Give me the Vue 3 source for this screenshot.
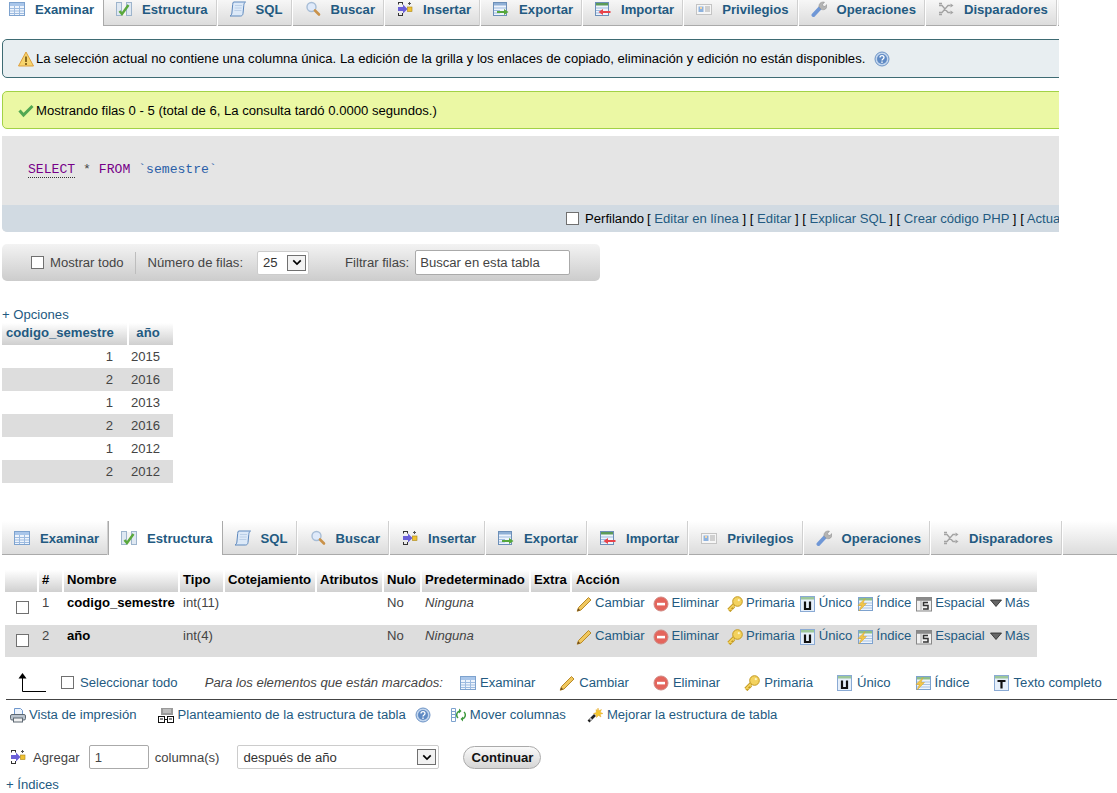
<script setup>
const tabs = [
  { label: 'Examinar', icon: 'i-browse' },
  { label: 'Estructura', icon: 'i-structure' },
  { label: 'SQL', icon: 'i-sql' },
  { label: 'Buscar', icon: 'i-search' },
  { label: 'Insertar', icon: 'i-insert' },
  { label: 'Exportar', icon: 'i-export' },
  { label: 'Importar', icon: 'i-import' },
  { label: 'Privilegios', icon: 'i-priv' },
  { label: 'Operaciones', icon: 'i-ops' },
  { label: 'Disparadores', icon: 'i-trig' }
]
const rows = [[1, 2015], [2, 2016], [1, 2013], [2, 2016], [1, 2012], [2, 2012]]
const fields = [
  { n: 1, name: 'codigo_semestre', type: 'int(11)' },
  { n: 2, name: 'año', type: 'int(4)' }
]
const heads = ['', '#', 'Nombre', 'Tipo', 'Cotejamiento', 'Atributos', 'Nulo', 'Predeterminado', 'Extra', 'Acción']
const actions = [
  { label: 'Cambiar', icon: 'i-pencil', wide: true },
  { label: 'Eliminar', icon: 'i-del', wide: true },
  { label: 'Primaria', icon: 'i-key' },
  { label: 'Único', icon: 'i-unique' },
  { label: 'Índice', icon: 'i-index' },
  { label: 'Espacial', icon: 'i-spatial' },
  { label: 'Más', icon: 'i-more', small: true }
]
const bulk = [
  { label: 'Examinar', icon: 'i-browse' },
  { label: 'Cambiar', icon: 'i-pencil' },
  { label: 'Eliminar', icon: 'i-del' },
  { label: 'Primaria', icon: 'i-key' },
  { label: 'Único', icon: 'i-unique' },
  { label: 'Índice', icon: 'i-index' },
  { label: 'Texto completo', icon: 'i-ftext' }
]
</script>

<template>
  <div class="page">
    <svg class="sprite" aria-hidden="true">
      <symbol id="i-browse" viewBox="0 0 16 16">
        <rect x=".5" y="1.5" width="15" height="13" fill="#eef4fc" stroke="#7da2ce" />
        <rect x="1" y="2" width="14" height="3" fill="#a9c6ea" />
        <path d="M1 7.5h14M1 10h14M1 12.5h14M5.5 5v9M10.5 5v9" stroke="#9dbbe0" fill="none" />
      </symbol>
      <symbol id="i-structure" viewBox="0 0 16 16">
        <rect x=".5" y="1.5" width="5" height="13" fill="#dfe8f2" stroke="#9db4cc" />
        <rect x="10.5" y="1.5" width="5" height="13" fill="#dfe8f2" stroke="#9db4cc" />
        <rect x="6" y="2" width="4" height="12" fill="#f4f4f4" />
        <path d="M3.5 10l2.5 3L12.5 4" fill="none" stroke="#5aa83c" stroke-width="2.4" />
      </symbol>
      <symbol id="i-sql" viewBox="0 0 16 16">
        <path d="M3.500 1h12c-1.200.8-1.600 2-1.700 3.500l-.8 8c-.2 1.500-1 2.500-2.500 2.500H0c1.200-.6 1.700-1.600 1.900-3l.8-8.500c.1-1.200.3-2 .8-2.500z" fill="#dce9f8" stroke="#5d88bd" />
        <path d="M5 4.500h7M4.700 7h7M4.400 9.500h7" stroke="#bcd0e8" fill="none" />
      </symbol>
      <symbol id="i-search" viewBox="0 0 16 16">
        <circle cx="6.500" cy="6" r="4.500" fill="#dfeafa" stroke="#a7bdd6" stroke-width="1.400" />
        <path d="M10 9.500l4 4" stroke="#c9924a" stroke-width="2.600" stroke-linecap="round" />
      </symbol>
      <symbol id="i-insert" viewBox="0 0 16 16">
        <path d="M1 1.500h5M1 14.500h5M1.500 1v2.500M5.500 1v2.500M1.500 12v3M5.500 12v3" stroke="#333" fill="none" />
        <path d="M1 6h5V3.600L10.500 8 6 12.400V10H1z" fill="#6a5fd8" />
        <rect x="10.500" y="6" width="4.500" height="4.500" fill="#f1c232" stroke="#a88414" stroke-width=".6" />
        <path d="M12.500 1v3M11 2.500h3" stroke="#555" />
      </symbol>
      <symbol id="i-export" viewBox="0 0 16 16">
        <rect x=".5" y="1.5" width="13" height="13" fill="#eef4fc" stroke="#6c8fb8" />
        <rect x="1" y="2" width="12" height="2.500" fill="#8fb0d6" />
        <path d="M1 7h12M1 9.500h6M1 12h6" stroke="#9dbbe0" />
        <path d="M4 10h7V8l4.500 3-4.500 3v-2H4z" fill="#56a83c" />
      </symbol>
      <symbol id="i-import" viewBox="0 0 16 16">
        <rect x=".5" y="1.500" width="13" height="13" fill="#eef4fc" stroke="#6c8fb8" />
        <rect x="1" y="2" width="12" height="2.500" fill="#5c9a58" />
        <path d="M1 7h12M1 9.500h6M1 12h6" stroke="#9dbbe0" />
        <path d="M15.500 10H8V8l-4.500 3L8 14v-2h7.500z" fill="#e8434a" />
      </symbol>
      <symbol id="i-priv" viewBox="0 0 16 16">
        <rect x=".5" y="3.500" width="15" height="10" fill="#f6f6f6" stroke="#c4c4c4" />
        <rect x="2.500" y="5.500" width="5" height="5.500" fill="#8db2de" />
        <rect x="4" y="6" width="2" height="2" fill="#f3d6a8" />
        <path d="M9 6h5M9 8h5M9 10h5" stroke="#aaa" />
      </symbol>
      <symbol id="i-ops" viewBox="0 0 16 16">
        <path d="M2.500 14L9.500 6.500" stroke="#6f97d6" stroke-width="4" stroke-linecap="round" />
        <path d="M10 1.500c1-.5 2.500-.7 3.500-.3L11.600 3.400l.6 1.800 1.900.4L15.600 3.600c.6 1.600.2 3.300-1 4.300-1.300 1-3 1.100-4.300.4L8 6c-.3-1.900.5-3.600 2-4.500z" fill="#b4b4b4" stroke="#8a8a8a" stroke-width=".5" />
      </symbol>
      <symbol id="i-trig" viewBox="0 0 16 16">
        <path d="M1 4.500h3l6 7h2.500M1 11.500h3l6-7h2.500M1 2.500h3M1 13.500h3" fill="none" stroke="#a3a3a3" stroke-width="1.300" />
        <path d="M12.500 2.500l3 2-3 2zM12.500 9.500l3 2-3 2z" fill="#a3a3a3" />
      </symbol>
      <symbol id="i-warn" viewBox="0 0 16 16">
        <path d="M8 1L15.500 15H.5z" fill="#f6d46c" stroke="#dd9f3c" stroke-linejoin="round" />
        <rect x="7" y="5.500" width="2" height="5.500" fill="#8a6a20" />
        <rect x="7" y="12" width="2" height="2" fill="#8a6a20" />
      </symbol>
      <symbol id="i-help" viewBox="0 0 16 16">
        <circle cx="8" cy="8" r="7" fill="#c3d6ee" stroke="#6d94c6" />
        <circle cx="8" cy="8" r="5" fill="#5f8ac4" />
        <path d="M6 6.500c0-2.500 4-2.500 4 0 0 1.500-2 1.500-2 3" fill="none" stroke="#fff" stroke-width="1.300" />
        <rect x="7.300" y="10.500" width="1.400" height="1.400" fill="#fff" />
      </symbol>
      <symbol id="i-check" viewBox="0 0 16 16">
        <path d="M1.500 8.500l4 4.500L14.500 4" fill="none" stroke="#52a852" stroke-width="3" />
      </symbol>
      <symbol id="i-pencil" viewBox="0 0 16 16">
        <path d="M12.500 1.500l2.500 2.500L5 14l-3.800 1.200L2.500 11.500z" fill="#f0c75e" stroke="#b98a28" />
        <path d="M1.200 15.200l1-3 2 2z" fill="#6b4a20" />
      </symbol>
      <symbol id="i-del" viewBox="0 0 16 16">
        <circle cx="8" cy="8" r="7" fill="#e4655c" stroke="#cf8a84" />
        <rect x="4" y="6.800" width="8" height="2.600" fill="#fff" />
      </symbol>
      <symbol id="i-key" viewBox="0 0 16 16">
        <path d="M1.500 14L8 7.500M2.500 13l2 2M5 10.500l2 2" fill="none" stroke="#c39a22" stroke-width="3.200" />
        <path d="M1.500 14L8 7.500M3 12.500l1.500 1.500M5.500 10l1.500 1.500" fill="none" stroke="#f3d25e" stroke-width="1.600" />
        <circle cx="10.500" cy="5.500" r="4.800" fill="#f3d25e" stroke="#c39a22" />
        <circle cx="11.800" cy="4.200" r="1.100" fill="#fff6c4" />
      </symbol>
      <symbol id="i-unique" viewBox="0 0 16 16">
        <rect x=".5" y=".5" width="14" height="15" fill="#e6effa" stroke="#8aaad4" />
        <rect x="1" y="1" width="13" height="2.500" fill="#9cc79a" />
        <path d="M5 5.500v7.500h5V5.500" fill="none" stroke="#111" stroke-width="2.200" />
      </symbol>
      <symbol id="i-index" viewBox="0 0 16 16">
        <rect x="1.500" y="1.500" width="14" height="13" fill="#eef4fc" stroke="#7da2ce" />
        <rect x="2" y="2" width="13" height="2.500" fill="#8fbf8a" />
        <path d="M2 7h13M2 9.500h13M2 12h13" stroke="#a8c2e2" />
        <path d="M8 2.500L1 9.500h3.500L2 15 9.500 7.500H6z" fill="#f2c648" stroke="#d8a428" stroke-width=".5" />
      </symbol>
      <symbol id="i-spatial" viewBox="0 0 16 16">
        <rect x=".5" y="1.500" width="15" height="13.500" fill="#f1f1f1" stroke="#888" />
        <rect x="1" y="2" width="14" height="2.800" fill="#8a8a8a" />
        <path d="M5 5v9" stroke="#aaa" />
        <path d="M12 6.500H7.500v3H12v3.500H7" fill="none" stroke="#333" stroke-width="1.500" />
      </symbol>
      <symbol id="i-ftext" viewBox="0 0 16 16">
        <rect x=".5" y=".5" width="14" height="15" fill="#e6effa" stroke="#8aaad4" />
        <rect x="1" y="1" width="13" height="2.500" fill="#9cc79a" />
        <path d="M3.500 6h8M7.500 6v7.500" fill="none" stroke="#111" stroke-width="2.200" />
      </symbol>
      <symbol id="i-more" viewBox="0 0 12 8">
        <path d="M.5 1h11L6 7.500z" fill="#666" stroke="#222" stroke-width=".8" />
      </symbol>
      <symbol id="i-print" viewBox="0 0 16 16">
        <path d="M4.500 1.500h6l2 2v4h-8z" fill="#eef4fc" stroke="#6f97cc" />
        <rect x=".5" y="7.500" width="15" height="5.500" rx="1.500" fill="#b9c2cc" stroke="#5d6872" />
        <rect x="3.500" y="11" width="9" height="4" fill="#f2f2f2" stroke="#5d6872" />
      </symbol>
      <symbol id="i-schema" viewBox="0 0 16 16">
        <rect x="3" y="1" width="12" height="7" fill="#9a9a9a" />
        <path d="M5 3h8M5 5h8" stroke="#ddd" />
        <rect x=".5" y="9.500" width="6" height="6" fill="#fff" stroke="#111" />
        <rect x="9.500" y="9.500" width="6" height="6" fill="#fff" stroke="#111" />
        <rect x="2" y="11.500" width="3" height="1" fill="#111" />
        <rect x="11" y="11.500" width="3" height="1" fill="#111" />
        <path d="M6.500 12.500h3" stroke="#111" />
      </symbol>
      <symbol id="i-move" viewBox="0 0 16 16">
        <path d="M1.500 1.500h4M1.500 4.500h4M1.500 7.500h4M1.500 10.500h4M1.500 14.500h4" stroke="#7da2ce" />
        <path d="M1.500 1.500v13M5.500 1.500v13" stroke="#7da2ce" />
        <path d="M8 11a4 4 0 0 1 0-6l2-1M14 5a4 4 0 0 1 0 6l-2 1" fill="none" stroke="#3f9a3f" stroke-width="1.500" />
        <path d="M9 1.500l2.500 2.500L9 6.500zM13 9.500L10.500 12l2.500 2.500z" fill="#3f9a3f" />
      </symbol>
      <symbol id="i-wand" viewBox="0 0 16 16">
        <path d="M1.500 14.500L8 8" stroke="#222" stroke-width="2.600" />
        <path d="M3 13l1.500-1.500" stroke="#bbb" stroke-width="2.600" />
        <path d="M11 1l.8 2.800L14.500 2.500l-1.300 2.800L16 6.500l-2.800.8L14 10l-2.500-1.500L9.500 10.500 9 7.500 6.500 6.500l2.800-1L9 2.500l1.300 1z" fill="#f6c92e" stroke="#e0a020" stroke-width=".4" />
      </symbol>
      <symbol id="i-arrow" viewBox="0 0 28 20">
        <path d="M4.500 18.500V3M4.500 18.500H28" fill="none" stroke="#000" />
        <path d="M.5 5.500L4.500 0l4 5.500z" fill="#000" />
      </symbol>
    </svg>

    <div class="top">
      <div class="tabbar first">
        <div class="tabrow shift">
          <a v-for="(t, i) in tabs" :key="t.label" class="tab" :class="{ on: i === 0 }">
            <svg class="ic"><use :href="'#' + t.icon" /></svg>{{ t.label }}
          </a>
        </div>
      </div>

      <div class="msg notice">
        <svg class="ic msgic"><use href="#i-warn" /></svg>
        <span>La selección actual no contiene una columna única. La edición de la grilla y los enlaces de copiado, eliminación y edición no están disponibles.</span>
        <svg class="ic helpic"><use href="#i-help" /></svg>
      </div>

      <div class="msg success">
        <svg class="ic msgic"><use href="#i-check" /></svg>
        <span>Mostrando filas 0 - 5 (total de 6, La consulta tardó 0.0000 segundos.)</span>
      </div>

      <div class="sqlbox">
        <div class="code"><span class="kw under">SELECT</span> <span class="star">*</span> <span class="kw">FROM</span> <span class="str">`semestre`</span></div>
        <div class="sqlfoot">
          <input type="checkbox" class="cb" aria-label="Perfilando" />
          <span class="prof">Perfilando</span>
          <span class="bracket">[ <a>Editar en línea</a> ] [ <a>Editar</a> ] [ <a>Explicar SQL</a> ] [ <a>Crear código PHP</a> ] [ <a>Actua</a></span>
        </div>
      </div>
    </div>

    <div class="navbar">
      <input type="checkbox" class="cb" aria-label="Mostrar todo" />
      <span class="showall">Mostrar todo</span>
      <span class="divider"></span>
      <span>Número de filas:</span>
      <span class="sel small">25<span class="selbtn"><svg viewBox="0 0 12 8" class="chev"><path d="M1.500 1.500L6 6l4.500-4.500" fill="none" stroke="#000" stroke-width="2" /></svg></span></span>
      <span class="filterlabel">Filtrar filas:</span>
      <input class="txt search" value="Buscar en esta tabla" aria-label="Filtrar filas" />
    </div>

    <a class="plus opts">+ Opciones</a>
    <table class="data">
      <thead>
        <tr><th class="c1">codigo_semestre</th><th class="c2">año</th></tr>
      </thead>
      <tbody>
        <tr v-for="(r, i) in rows" :key="i" :class="{ alt: i % 2 === 1 }">
          <td class="num">{{ r[0] }}</td>
          <td class="yr">{{ r[1] }}</td>
        </tr>
      </tbody>
    </table>

    <div class="tabbar second">
      <div class="tabrow">
        <a v-for="(t, i) in tabs" :key="t.label" class="tab" :class="{ on: i === 1 }">
          <svg class="ic"><use :href="'#' + t.icon" /></svg>{{ t.label }}
        </a>
      </div>
    </div>

    <table class="struct">
      <colgroup>
        <col style="width:33px" /><col style="width:25px" /><col style="width:116px" /><col style="width:45px" />
        <col style="width:92px" /><col style="width:67px" /><col style="width:38px" /><col style="width:109px" />
        <col style="width:41px" /><col />
      </colgroup>
      <thead>
        <tr><th v-for="h in heads" :key="h">{{ h }}</th></tr>
      </thead>
      <tbody>
        <tr v-for="(f, i) in fields" :key="f.n" :class="{ alt: i === 1 }">
          <td class="chk"><input type="checkbox" class="cb" :aria-label="f.name" /></td>
          <td class="idx">{{ f.n }}</td>
          <td class="fname">{{ f.name }}</td>
          <td class="ftype">{{ f.type }}</td>
          <td></td>
          <td></td>
          <td class="fnull">No</td>
          <td class="fdef"><em>Ninguna</em></td>
          <td></td>
          <td class="acts">
            <div class="actrow">
              <a v-for="a in actions" :key="a.label" class="act" :class="{ wide: a.wide }">
                <svg class="ic" :class="{ tri: a.small }"><use :href="'#' + a.icon" /></svg>{{ a.label }}
              </a>
            </div>
          </td>
        </tr>
      </tbody>
    </table>

    <div class="bulk">
      <svg class="arrow"><use href="#i-arrow" /></svg>
      <input type="checkbox" class="cb" aria-label="Seleccionar todo" />
      <a class="selall">Seleccionar todo</a>
      <em class="marked">Para los elementos que están marcados:</em>
      <a v-for="b in bulk" :key="b.label" class="bulkitem">
        <svg class="ic"><use :href="'#' + b.icon" /></svg>{{ b.label }}
      </a>
    </div>

    <div class="links">
      <a class="lnk print"><svg class="ic"><use href="#i-print" /></svg>Vista de impresión</a>
      <a class="lnk schema"><svg class="ic"><use href="#i-schema" /></svg>Planteamiento de la estructura de tabla</a>
      <svg class="ic help2"><use href="#i-help" /></svg>
      <a class="lnk move"><svg class="ic"><use href="#i-move" /></svg>Mover columnas</a>
      <a class="lnk wand"><svg class="ic"><use href="#i-wand" /></svg>Mejorar la estructura de tabla</a>
    </div>

    <div class="addrow">
      <svg class="ic"><use href="#i-insert" /></svg>
      <span class="agregar">Agregar</span>
      <input class="txt qty" value="1" aria-label="Número de columnas" />
      <span class="cols">columna(s)</span>
      <span class="sel big">después de año<span class="selbtn"><svg viewBox="0 0 12 8" class="chev"><path d="M1.500 1.500L6 6l4.500-4.500" fill="none" stroke="#000" stroke-width="2" /></svg></span></span>
      <button class="go">Continuar</button>
    </div>

    <a class="plus indices">+ Índices</a>
  </div>
</template>

<style>
html, body { margin: 0; background: #fff; overflow: hidden; }
</style>

<style scoped>
.page {
  width: 1117px;
  height: 793px;
  overflow: hidden;
  font-family: "Liberation Sans", Arial, sans-serif;
  font-size: 13.12px;
  line-height: 15px;
  color: #444;
}
.sprite { position: absolute; width: 0; height: 0; }
.ic { width: 16px; height: 16px; flex: none; }
a { color: #235a81; text-decoration: none; }

.top { width: 1059px; overflow: hidden; }

.tabbar {
  height: 34px;
  box-sizing: border-box;
  border-bottom: 1px solid #aaa;
  background: linear-gradient(#fff, #dcdcdc);
}
.first { margin-top: -8px; }
.second { margin: 38px 0 0 2px; }
.tabrow { display: flex; height: 34px; }
.shift { margin-left: -3px; }
.tab {
  display: flex;
  align-items: center;
  gap: 10px;
  padding: 0 9px 0 12px;
  font-weight: bold;
  border-right: 1px solid #fff;
  box-shadow: inset -1px 0 0 #d0d0d0;
  color: #235a81;
}
.tab.on {
  background: #fff;
  border-left: 1px solid #aaa;
  border-right: 1px solid #aaa;
  box-shadow: none;
  margin-left: -1px;
}

.msg {
  display: flex;
  align-items: center;
  box-sizing: border-box;
  margin: 13px -20px 0 2px;
  padding-left: 15px;
  border: 1px solid;
  border-radius: 5px;
  color: #000;
}
.msgic { margin-right: 2px; }
.helpic { margin-left: 9px; }
.notice { height: 39px; background: #e8eef1; border-color: #3e6b73; }
.success { height: 38px; background: #ebf8a4; border-color: #a2d246; }

.sqlbox {
  margin: 7px 0 0 2px;
  background: #e5e5e5;
  border-radius: 0 0 0 5px;
  overflow: hidden;
  width: 1075px;
}
.code {
  height: 69px;
  box-sizing: border-box;
  padding: 26px 0 0 26px;
  font-family: "Liberation Mono", "Courier New", monospace;
  font-size: 13.12px;
  white-space: pre;
  color: #444;
}
.kw { color: #770088; }
.under { border-bottom: 1px dotted #333; }
.str { color: #2a5fa8; }
.sqlfoot {
  display: flex;
  align-items: center;
  height: 27px;
  padding-left: 564px;
  background: #d1dae2;
  white-space: nowrap;
  color: #000;
}
.prof { margin-left: 6px; margin-right: 3px; }
.bracket a { color: #235a81; }

.cb {
  appearance: none;
  width: 13px;
  height: 13px;
  margin: 0;
  flex: none;
  box-sizing: border-box;
  background: #fff;
  border: 1px solid #707070;
}

.navbar {
  display: flex;
  align-items: center;
  box-sizing: border-box;
  width: 598px;
  height: 37px;
  margin: 12px 0 0 2px;
  padding-left: 29px;
  border-radius: 5px;
  background: linear-gradient(#f3f3f3, #cccccc);
  white-space: nowrap;
}
.showall { margin-left: 6px; }
.divider { width: 1px; height: 22px; margin: 0 12px 0 11px; background: #bdbdbd; }
.filterlabel { margin-left: 36px; }

.sel {
  position: relative;
  display: flex;
  align-items: center;
  box-sizing: border-box;
  height: 24px;
  padding-left: 5px;
  background: #fff;
  border: 1px solid #ccc;
  border-radius: 2px;
  color: #333;
}
.small { width: 52px; margin-left: 14px; }
.big { width: 202px; margin-left: 17px; }
.selbtn {
  position: absolute;
  right: 2px;
  top: 3px;
  width: 19px;
  height: 16px;
  box-sizing: border-box;
  display: flex;
  align-items: center;
  justify-content: center;
  border: 1px solid #707070;
  background: #f2f2f2;
}
.chev { width: 10px; height: 7px; }

.txt {
  box-sizing: border-box;
  margin: 0;
  padding: 0 4px;
  font: inherit;
  color: #444;
  background: #fff;
  border: 1px solid #aaa;
  border-radius: 2px;
  outline: none;
}
.search { width: 155px; height: 25px; margin-left: 6px; }

.plus { display: block; margin-left: 2px; }
.opts { margin-top: 26px; }

.data {
  border-collapse: collapse;
  margin: 1px 0 0 2px;
  width: 171px;
  table-layout: fixed;
}
.data th {
  height: 22px;
  padding: 0 0 3px;
  box-sizing: border-box;
  font-weight: bold;
  color: #235a81;
  background: linear-gradient(#fff, #cfcfcf);
}
.c1 { width: 126px; border-right: 2px solid #fff; text-align: left; padding-left: 4px !important; }
.c2 { padding-right: 6px !important; }
.data td { height: 23px; padding: 0; box-sizing: border-box; }
.alt td { background: #ddd; }
.num { text-align: right; padding-right: 15px !important; }
.yr { padding-left: 3px !important; }

.struct {
  border-collapse: collapse;
  table-layout: fixed;
  width: 1032px;
  margin: 15px 0 0 5px;
}
.struct th {
  height: 22px;
  padding: 0 0 4px 3px;
  box-sizing: border-box;
  text-align: left;
  font-weight: bold;
  color: #000;
  white-space: nowrap;
  border-right: 2px solid #fff;
  background: linear-gradient(#fff, #d0d0d0);
}
.struct th:last-child { border-right: 0; padding-left: 4px; }
.struct td {
  height: 33px;
  padding: 3px 0 0 4px;
  box-sizing: border-box;
  vertical-align: top;
  white-space: nowrap;
}
.struct .alt td { height: 32px; }
.chk { padding: 9px 0 0 11px !important; }
.fname { font-weight: bold; color: #000; }
.fdef em { font-style: italic; }
.acts { padding-left: 5px !important; }
.actrow { display: flex; }
.act {
  display: flex;
  align-items: flex-start;
  gap: 3px;
  margin-right: 5px;
}
.act.wide { margin-right: 8px; }
.act .ic { margin-top: 1px; }
.act .tri { width: 12px; height: 8px; margin-top: 4px; }

.bulk {
  display: flex;
  align-items: center;
  box-sizing: border-box;
  height: 33px;
  margin: 10px 0 0 6px;
  padding: 0 0 1px 12px;
  border-bottom: 1px solid #444;
  white-space: nowrap;
}
.arrow { width: 28px; height: 20px; flex: none; margin-right: 15px; }
.selall { margin-left: 6px; }
.marked { margin-left: 27px; margin-right: 17px; }
.bulkitem { display: flex; align-items: center; gap: 4px; margin-right: 24px; }

.links {
  display: flex;
  align-items: center;
  height: 28px;
  box-sizing: border-box;
  padding: 1px 0 0 10px;
  white-space: nowrap;
}
.lnk { display: flex; align-items: center; gap: 3px; }
.schema { margin-left: 21px; gap: 4px; }
.help2 { margin-left: 9px; }
.move { margin-left: 19px; gap: 4px; }
.wand { margin-left: 21px; gap: 4px; }

.addrow {
  display: flex;
  align-items: center;
  height: 24px;
  margin-top: 17px;
  padding-left: 10px;
  white-space: nowrap;
}
.agregar { margin-left: 7px; }
.qty { width: 60px; height: 24px; margin-left: 9px; padding-left: 5px; }
.cols { margin-left: 6px; }
.big { margin-left: 18px; }
.go {
  margin-left: 24px;
  width: 78px;
  height: 23px;
  padding: 0;
  font: bold 13.12px "Liberation Sans", Arial, sans-serif;
  color: #111;
  border: 1px solid #aaa;
  border-radius: 12px;
  background: linear-gradient(#fafafa, #d5d5d5);
}
.indices { margin: 8px 0 0 6px; }
</style>
